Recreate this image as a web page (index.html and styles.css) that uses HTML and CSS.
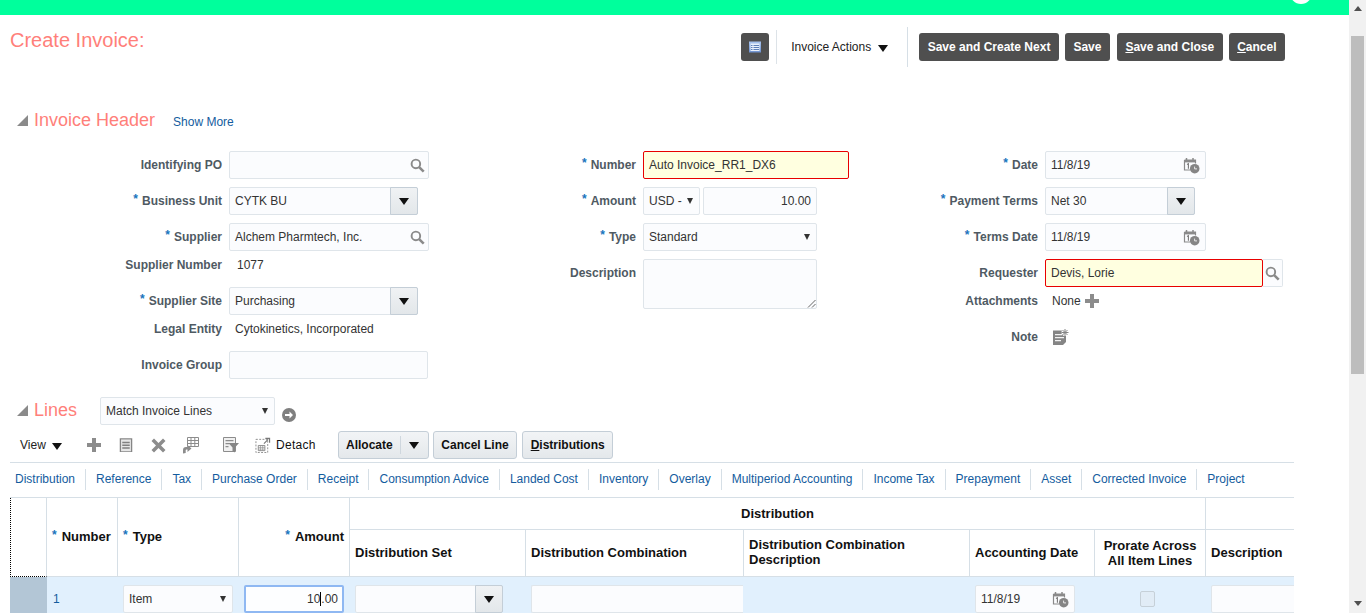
FILE: index.html
```html
<!DOCTYPE html>
<html lang="en">
<head>
<meta charset="utf-8">
<title>Create Invoice</title>
<link rel="stylesheet" href="styles.css">
</head>
<body>
<svg class="defs" width="0" height="0" aria-hidden="true">
  <symbol id="i-search" viewBox="0 0 14 14"><circle cx="5.5" cy="5.5" r="4" fill="none" stroke="#8a8a8a" stroke-width="1.8"/><path d="M8.5 8.5l4.3 4.3" stroke="#8a8a8a" stroke-width="2.4" fill="none"/></symbol>
  <symbol id="i-cal" viewBox="0 0 17 17"><path d="M1.5 3h11v3.5M1.5 3v10h5.5" fill="none" stroke="#8a8a8a" stroke-width="1.2"/><path d="M1 3h12v2.4H1z" fill="#8a8a8a"/><path d="M3.5 1v3M10 1v3" stroke="#8a8a8a" stroke-width="1.5"/><path d="M4 7.6l1.4-.8v5" fill="none" stroke="#777" stroke-width="1.1"/><circle cx="11.7" cy="11.7" r="4.8" fill="#858585"/><path d="M11.6 9.6v2.3h2.4" fill="none" stroke="#e8e8e8" stroke-width="1"/></symbol>
  <symbol id="i-plus" viewBox="0 0 14 14"><path d="M5 0h4v5h5v4H9v5H5V9H0V5h5z" fill="#8c8c8c"/></symbol>
  <symbol id="i-doc" viewBox="0 0 14 15"><path d="M1.5 1.5h11v13h-11z" fill="#e6e6e6"/><path d="M3 4h8v1.500H3zM3 7h8v1.500H3zM3 10h8v1.500H3z" fill="#808080"/><path d="M1 1h12v14H1z" fill="none" stroke="#858585" stroke-width="1.4"/></symbol>
  <symbol id="i-x" viewBox="0 0 15 15"><path d="M3 .5l4.500 4.500L12 .5 14.500 3 10 7.500l4.500 4.500-2.500 2.500L7.500 10 3 14.500.5 12 5 7.500.5 3z" fill="#8c8c8c"/></symbol>
  <symbol id="i-grid" viewBox="0 0 17 17"><path d="M5.500.5h11v9h-11zM5.500 3.500h11M5.500 6.500h11M9 .5v9M12.800.5v9" fill="none" stroke="#8c8c8c"/><path d="M1 16.500v-3.500q0-3 3-3h1.500V8l4 3.500-4 3.500v-2.500H4.500q-.8 0-.8 1v2.500z" fill="#8c8c8c"/></symbol>
  <symbol id="i-filter" viewBox="0 0 16 16"><path d="M.5.5h12v14H.5z" fill="#f0f0f0" stroke="#8c8c8c"/><path d="M2.500 3h8v1.300h-8zM2.500 6h4v1.300h-4zM2.500 9h3v1.300h-3z" fill="#8c8c8c"/><path d="M5.500 6h10.500l-4 4.500v5l-2.500-1.500v-3.500z" fill="#858585"/></symbol>
  <symbol id="i-detach" viewBox="0 0 16 17"><path d="M.5 2.500h12.500v14H.5z" fill="none" stroke="#8c8c8c" stroke-dasharray="2 1.500"/><path d="M3 9h7v5.500H3z" fill="#fff" stroke="#8c8c8c"/><path d="M3 11h7M3 12.800h7M5.300 9v5.500M7.700 9v5.500" stroke="#8c8c8c" stroke-width=".7"/><path d="M9 7l4.500-4.500M10.500 1.500h4.500v4.500" fill="none" stroke="#777" stroke-width="1.200"/></symbol>
  <symbol id="i-note" viewBox="0 0 16 16"><path d="M0 1.500h10L13 6v10H0z" fill="#858585"/><path d="M2 5h7v1.200H2zM2 8h9v1.200H2zM2 11h6v1.200H2z" fill="#f2f2f2"/><path d="M12 0v7M8.500 3.500h7M9.500 1l5 5M14.500 1l-5 5" stroke="#fff" stroke-width="2.400"/><path d="M12 0v7M8.500 3.500h7M9.500 1l5 5M14.500 1l-5 5" stroke="#858585" stroke-width="1"/><path d="M10 16l3-3v3z" fill="#fff"/></symbol>
  <symbol id="i-list" viewBox="0 0 14 14"><defs><linearGradient id="g-list" x1="0" y1="0" x2="0" y2="1"><stop offset="0" stop-color="#a9c4ee"/><stop offset="1" stop-color="#6f92cf"/></linearGradient></defs><path d="M1 1.500h12v11H1z" fill="url(#g-list)"/><path d="M2.500 3.500h9v7.500h-9z" fill="#e9f0fb"/><path d="M3 5h1.500v1H3zM5.500 5H11v1H5.500zM3 7h1.500v1H3zM5.500 7H11v1H5.500zM3 9h1.500v1H3zM5.500 9H11v1H5.500z" fill="#5d7fb8"/></symbol>
</svg>

<div class="app">
  <main class="page">
    <div class="topbar"><span class="avatar"></span></div>

    <div class="titlebar">
      <h1 class="page-title">Create Invoice:</h1>
      <div class="actions">
        <button class="dark icon-only"><svg class="ic14"><use href="#i-list"/></svg></button>
        <span class="sep-short"></span>
        <span class="menu">Invoice Actions <span class="tri-down"></span></span>
        <span class="sep-tall"></span>
        <button class="dark">Save and Create Next</button>
        <button class="dark">Save</button>
        <button class="dark"><u>S</u>ave and Close</button>
        <button class="dark"><u>C</u>ancel</button>
      </div>
    </div>

    <div class="section-head">
      <span class="disclosure"></span>
      <h2 class="section-title">Invoice Header</h2>
      <a class="show-more">Show More</a>
    </div>

    <div class="form">
      <div class="col col-a">
        <div class="row"><label class="lbl">Identifying PO</label><div class="field w200 has-icon"><span></span><svg class="ic15 search"><use href="#i-search"/></svg></div></div>
        <div class="row"><label class="lbl"><span class="req">*</span>Business Unit</label><div class="combo w189"><span class="combo-text">CYTK BU</span><span class="combo-btn"><span class="tri-down"></span></span></div></div>
        <div class="row"><label class="lbl"><span class="req">*</span>Supplier</label><div class="field w200 has-icon"><span>Alchem Pharmtech, Inc.</span><svg class="ic15 search"><use href="#i-search"/></svg></div></div>
        <div class="row-text"><label class="lbl">Supplier Number</label><span class="val val-num">1077</span></div>
        <div class="row"><label class="lbl"><span class="req">*</span>Supplier Site</label><div class="combo w189"><span class="combo-text">Purchasing</span><span class="combo-btn"><span class="tri-down"></span></span></div></div>
        <div class="row-text"><label class="lbl">Legal Entity</label><span class="val">Cytokinetics, Incorporated</span></div>
        <div class="row"><label class="lbl">Invoice Group</label><div class="field w199"></div></div>
      </div>

      <div class="col col-b">
        <div class="row"><label class="lbl"><span class="req">*</span>Number</label><div class="field w206 invalid">Auto Invoice_RR1_DX6</div></div>
        <div class="row"><label class="lbl"><span class="req">*</span>Amount</label><div class="amount-pair"><div class="field w57 select"><span>USD -</span><span class="tri-small"></span></div><div class="field w114 right">10.00</div></div></div>
        <div class="row"><label class="lbl"><span class="req">*</span>Type</label><div class="field w174 select"><span>Standard</span><span class="tri-small"></span></div></div>
        <div class="row"><label class="lbl">Description</label><div class="field w174 area"><svg class="grip" width="9" height="9" viewBox="0 0 9 9"><path d="M8.500 1L1 8.500M8.500 5L5 8.500" stroke="#666" fill="none"/></svg></div></div>
      </div>

      <div class="col col-c">
        <div class="row"><label class="lbl"><span class="req">*</span>Date</label><div class="field w161 has-icon"><span>11/8/19</span><svg class="ic17"><use href="#i-cal"/></svg></div></div>
        <div class="row"><label class="lbl"><span class="req">*</span>Payment Terms</label><div class="combo w150"><span class="combo-text">Net 30</span><span class="combo-btn"><span class="tri-down"></span></span></div></div>
        <div class="row"><label class="lbl"><span class="req">*</span>Terms Date</label><div class="field w161 has-icon"><span>11/8/19</span><svg class="ic17"><use href="#i-cal"/></svg></div></div>
        <div class="row"><label class="lbl">Requester</label><div class="field w218 invalid">Devis, Lorie</div><span class="search-side"><svg class="ic15"><use href="#i-search"/></svg></span></div>
        <div class="row-text"><label class="lbl">Attachments</label><span class="val val-att">None</span><svg class="ic14 att-plus"><use href="#i-plus"/></svg></div>
        <div class="row"><label class="lbl">Note</label><svg class="ic16 note"><use href="#i-note"/></svg></div>
      </div>
    </div>

    <div class="section-head lines-head">
      <span class="disclosure"></span>
      <h2 class="section-title">Lines</h2>
      <div class="field w175 select lines-select"><span>Match Invoice Lines</span><span class="tri-small"></span></div>
      <span class="go"><svg width="14" height="14" viewBox="0 0 14 14"><circle cx="7" cy="7" r="7" fill="#7f7f7f"/><path d="M3 6h4.500V3.500L11 7l-3.500 3.500V8H3z" fill="#fff"/></svg></span>
    </div>

    <div class="lines-tools">
      <span class="view">View <span class="tri-down"></span></span>
      <span class="tool"><svg class="ic14"><use href="#i-plus"/></svg></span>
      <span class="tool"><svg class="ic14"><use href="#i-doc"/></svg></span>
      <span class="tool"><svg class="ic15"><use href="#i-x"/></svg></span>
      <span class="tool"><svg class="ic17"><use href="#i-grid"/></svg></span>
      <span class="tool tool-filter"><svg class="ic16"><use href="#i-filter"/></svg></span>
      <span class="tool-detach"><svg class="ic16"><use href="#i-detach"/></svg>Detach</span>
      <div class="split"><span class="split-main">Allocate</span><span class="split-arrow"><span class="tri-down"></span></span></div>
      <button class="light">Cancel Line</button>
      <button class="light"><u>D</u>istributions</button>
    </div>

    <nav class="tabs">
      <a>Distribution</a><a>Reference</a><a>Tax</a><a>Purchase Order</a><a>Receipt</a><a>Consumption Advice</a><a>Landed Cost</a><a>Inventory</a><a>Overlay</a><a>Multiperiod Accounting</a><a>Income Tax</a><a>Prepayment</a><a>Asset</a><a>Corrected Invoice</a><a>Project</a>
    </nav>

    <div class="table-wrap">
      <table class="lines">
        <colgroup>
          <col class="c0"><col class="c1"><col class="c2"><col class="c3"><col class="c4"><col class="c5"><col class="c6"><col class="c7"><col class="c8"><col class="c9">
        </colgroup>
        <thead>
          <tr class="h1">
            <th rowspan="2" class="corner"></th>
            <th rowspan="2" class="left"><span class="req">*</span>Number</th>
            <th rowspan="2" class="left"><span class="req">*</span>Type</th>
            <th rowspan="2" class="right"><span class="req">*</span>Amount</th>
            <th colspan="5" class="group">Distribution</th>
            <th></th>
          </tr>
          <tr class="h2">
            <th class="left">Distribution Set</th>
            <th class="left">Distribution Combination</th>
            <th class="left">Distribution Combination Description</th>
            <th class="left">Accounting Date</th>
            <th>Prorate Across All Item Lines</th>
            <th class="left">Description</th>
          </tr>
        </thead>
        <tbody>
          <tr>
            <td class="selector"></td>
            <td class="num"><a>1</a></td>
            <td><div class="field cell-type select"><span>Item</span><span class="tri-small"></span></div></td>
            <td><div class="field cell-amount">10<span class="caret"></span>.00</div></td>
            <td><div class="combo cell-set"><span class="combo-text"></span><span class="combo-btn"><span class="tri-down"></span></span></div></td>
            <td><div class="field cell-comb"></div></td>
            <td></td>
            <td><div class="field cell-date has-icon"><span>11/8/19</span><svg class="ic17"><use href="#i-cal"/></svg></div></td>
            <td><span class="checkbox"></span></td>
            <td><div class="field cell-desc"></div></td>
          </tr>
        </tbody>
      </table>
    </div>
  </main>

  <aside class="scrollbar">
    <span class="sb-btn"><span class="sb-up"></span></span>
    <span class="sb-thumb"></span>
    <span class="sb-btn sb-end"><span class="sb-down"></span></span>
  </aside>
</div>
</body>
</html>
```

FILE: styles.css
```css
* { box-sizing: border-box; }
html, body { margin: 0; height: 100%; overflow: hidden; }
body { font: 12px/14px "Liberation Sans", Arial, sans-serif; color: #333; background: #fff; }
.defs { position: absolute; }
svg { display: block; flex: none; }
.ic14 { width: 14px; height: 14px; }
.ic15 { width: 15px; height: 15px; }
.ic16 { width: 16px; height: 16px; }
.ic17 { width: 17px; height: 17px; }

.app { display: flex; height: 613px; }
.page { width: 1349px; height: 613px; overflow: hidden; flex: none; }

.topbar { height: 15px; background: #00ff9c; overflow: hidden; position: relative; }
.avatar { position: absolute; left: 1290px; top: -18px; width: 22px; height: 22px; border-radius: 50%; background: #fff; }

.titlebar { height: 90px; display: flex; justify-content: space-between; align-items: flex-start; padding: 12px 64px 0 10px; }
.page-title { margin: 1px 0 0; font-size: 20px; line-height: 24px; font-weight: normal; color: #ff7f7a; }
.actions { display: flex; align-items: center; height: 40px; }
button { font: inherit; cursor: default; }
.dark { height: 28px; padding: 0 8.5px; border: 0; border-radius: 3px; background: #4f4f4f; color: #fff; font-weight: bold; margin-left: 6px; white-space: nowrap; }
.dark:nth-last-child(2) { margin-left: 7px; }
.icon-only { width: 28px; padding: 0 7px; margin-left: 0; }
.sep-short { width: 1px; height: 34px; background: #dde3e8; margin-left: 7px; }
.sep-tall { width: 1px; height: 40px; background: #d6dfe6; margin-right: 5px; }
.menu { color: #222; padding-left: 14px; width: 130px; white-space: nowrap; }
.tri-down { display: inline-block; width: 0; height: 0; border-left: 5px solid transparent; border-right: 5px solid transparent; border-top: 7px solid #111; margin-left: 3px; vertical-align: -1px; }

.section-head { display: flex; align-items: center; height: 30px; padding-left: 17px; }
.disclosure { width: 0; height: 0; border-left: 11px solid transparent; border-bottom: 11px solid #8a8a8a; margin-right: 6px; }
.section-title { margin: 0; font-size: 18px; line-height: 22px; font-weight: normal; color: #ff7f7a; }
.show-more { color: #145c9e; margin: 3px 0 0 18px; }

.form { display: flex; padding-top: 16px; height: 262px; }
.col { flex: none; }
.col-a { width: 500px; }
.col-b { width: 400px; }
.col-a .lbl { width: 222px; margin-right: 7px; }
.col-b .lbl { width: 136px; margin-right: 7px; }
.col-c .lbl { width: 138px; margin-right: 7px; }
.row { display: flex; align-items: flex-start; min-height: 28px; margin-bottom: 8px; }
.row-text { display: flex; align-items: flex-start; height: 28px; line-height: 12px; }
.lbl { flex: none; text-align: right; font-weight: bold; color: #4f5a63; line-height: 28px; white-space: nowrap; }
.row-text .lbl { line-height: 12px; }
.req { color: #1a74bd; font-weight: bold; font-size: 12px; margin-right: 4px; vertical-align: 2px; line-height: 0; }
.val { color: #333; padding-left: 6px; white-space: nowrap; }
.val-num { padding-left: 8px; }
.val-att { padding-left: 7px; }
.att-plus { margin: -1px 0 0 4px; }
.note { margin: 6px 0 0 8px; }

.field { height: 28px; flex: none; display: flex; align-items: center; padding: 0 5px; background: #fbfcfe; border: 1px solid #dfe5ea; border-radius: 2px; color: #333; white-space: nowrap; }
.has-icon { justify-content: space-between; }
.has-icon span { flex: 1; }
.search { margin-right: -2px; }
.w200 { width: 200px; }
.w199 { width: 199px; }
.w206 { width: 206px; }
.w218 { width: 218px; }
.w174 { width: 174px; }
.w175 { width: 175px; }
.w161 { width: 161px; }
.w114 { width: 114px; }
.w57 { width: 57px; }
.invalid { background: #ffffe0; border-color: #e80000; }
.right { justify-content: flex-end; }
.select { justify-content: space-between; }
.tri-small { width: 0; height: 0; border-left: 3.5px solid transparent; border-right: 3.5px solid transparent; border-top: 6px solid #333; margin-right: 1px; }
.amount-pair { display: flex; gap: 3px; }
.area { height: 50px; position: relative; }
.grip { position: absolute; right: 0; bottom: 0; }

.combo { height: 28px; display: flex; flex: none; background: #fbfcfe; border: 1px solid #dfe5ea; border-radius: 2px; }
.w189 { width: 189px; }
.w150 { width: 150px; }
.combo-text { flex: 1; line-height: 26px; padding-left: 5px; color: #333; }
.combo-btn { width: 28px; margin: -1px -1px -1px 0; display: flex; align-items: center; justify-content: center; background: linear-gradient(#f0f2f4, #e3e7ea); border: 1px solid #c4ced7; border-radius: 0 2px 2px 0; }
.combo-btn .tri-down { margin: 0; }

.search-side { width: 20px; height: 28px; display: flex; align-items: center; justify-content: center; border: 1px solid #dfe5ea; border-left: 0; border-radius: 0 2px 2px 0; background: #fbfcfe; flex: none; }

.lines-head { height: 28px; }
.lines-head .disclosure { margin-bottom: 2px; }
.lines-head .section-title { width: 66px; margin-bottom: 2px; }
.go { margin: 8px 0 0 7px; }

.lines-tools { display: flex; align-items: center; height: 28px; margin-top: 6px; padding-left: 20px; }
.view { width: 58px; color: #222; white-space: nowrap; }
.view .tri-down { margin-left: 3px; }
.tool { width: 32px; display: flex; justify-content: center; }
.tool-filter { margin-left: 9px; width: 31px; }
.tool-detach { display: flex; align-items: center; gap: 5px; color: #111; letter-spacing: .3px; margin: 0 22px 0 9px; }
.light { height: 28px; padding: 0 7.5px; margin-left: 5px; border: 1px solid #c4ced7; border-radius: 3px; background: linear-gradient(#f2f4f6, #e4e8eb); color: #111; font-weight: bold; white-space: nowrap; }
.split + .light { margin-left: 4px; }
.split { width: 91px; height: 28px; display: flex; border: 1px solid #c4ced7; border-radius: 3px; background: linear-gradient(#f2f4f6, #e4e8eb); font-weight: bold; color: #111; }
.split-main { width: 62px; margin: 4px 0; line-height: 18px; text-align: center; border-right: 1px solid #cfd7de; }
.split-arrow { flex: 1; display: flex; align-items: center; justify-content: center; }
.split-arrow .tri-down { margin: 0; }

.tabs { margin: 3px 0 0 10px; width: 1284px; height: 35px; border-top: 1px solid #d6dfe6; display: flex; align-items: flex-start; padding-top: 6px; white-space: nowrap; }
.tabs a { color: #145c9e; padding: 3px 10px 4px; border-right: 1px solid #d6dfe6; height: 21px; line-height: 14px; }
.tabs a:first-child { padding-left: 5px; }
.tabs a:last-child { border-right: 0; }

.table-wrap { margin-left: 10px; width: 1284px; overflow: hidden; height: 120px; border-top: 1px solid #d6dfe6; }
.lines { border-collapse: separate; border-spacing: 0; table-layout: fixed; width: 1316px; }
.c0 { width: 37px; }
.c1 { width: 71px; }
.c2 { width: 121px; }
.c3 { width: 111px; }
.c4 { width: 176px; }
.c5 { width: 218px; }
.c6 { width: 226px; }
.c7 { width: 125px; }
.c8 { width: 111px; }
.c9 { width: 120px; }
.lines th { font-size: 13px; font-weight: bold; color: #111; border-right: 1px solid #d6dfe6; border-bottom: 1px solid #d6dfe6; padding: 0 5px; line-height: 15px; text-align: center; }
.lines th.left { text-align: left; }
.lines th.right { text-align: right; }
.lines th .req { margin-right: 5px; }
.h1 th { height: 32px; }
.h2 th { height: 47px; }
.h1 th.left, .h1 th.right, .h2 th.left { padding-bottom: 2px; }
.lines th.corner { border-left: 1px dotted #000; border-bottom: 1px dotted #000; }
.lines td { background: #e1f0fd; height: 36px; padding: 8px 0 0 5px; vertical-align: top; }
.lines td.selector { background: #b3c6d6; padding: 0; }
.lines td.num { padding: 15px 0 0 6px; }
.num a { color: #145c9e; }
.cell-type { width: 110px; }
.cell-amount { width: 100px; justify-content: flex-end; border: 2px solid #8fb8f2; background: #fdfeff; padding-right: 4px; }
.caret { display: inline-block; width: 0; height: 14px; border-left: 1px solid #000; }
.cell-set { width: 148px; }
.cell-comb { width: 212px; border-right: 0; border-radius: 2px 0 0 2px; }
.cell-date { width: 100px; }
.lines td:nth-child(9) { padding: 14px 0 0 45px; }
.checkbox { display: block; width: 15px; height: 16px; border: 1px solid #c6d0d8; border-radius: 2px; background: #e1ecf6; }
.cell-desc { width: 120px; }

.scrollbar { width: 17px; height: 613px; background: #f1f1f1; display: flex; flex-direction: column; align-items: center; flex: none; }
.sb-btn { width: 17px; height: 17px; display: flex; align-items: center; justify-content: center; flex: none; }
.sb-up { width: 0; height: 0; border-left: 4px solid transparent; border-right: 4px solid transparent; border-bottom: 5px solid #505050; }
.sb-down { width: 0; height: 0; border-left: 4px solid transparent; border-right: 4px solid transparent; border-top: 5px solid #505050; }
.sb-thumb { width: 13px; height: 338px; margin-top: 19px; background: #bdbdbd; flex: none; }
.sb-end { margin-top: auto; margin-bottom: 1px; }
```
